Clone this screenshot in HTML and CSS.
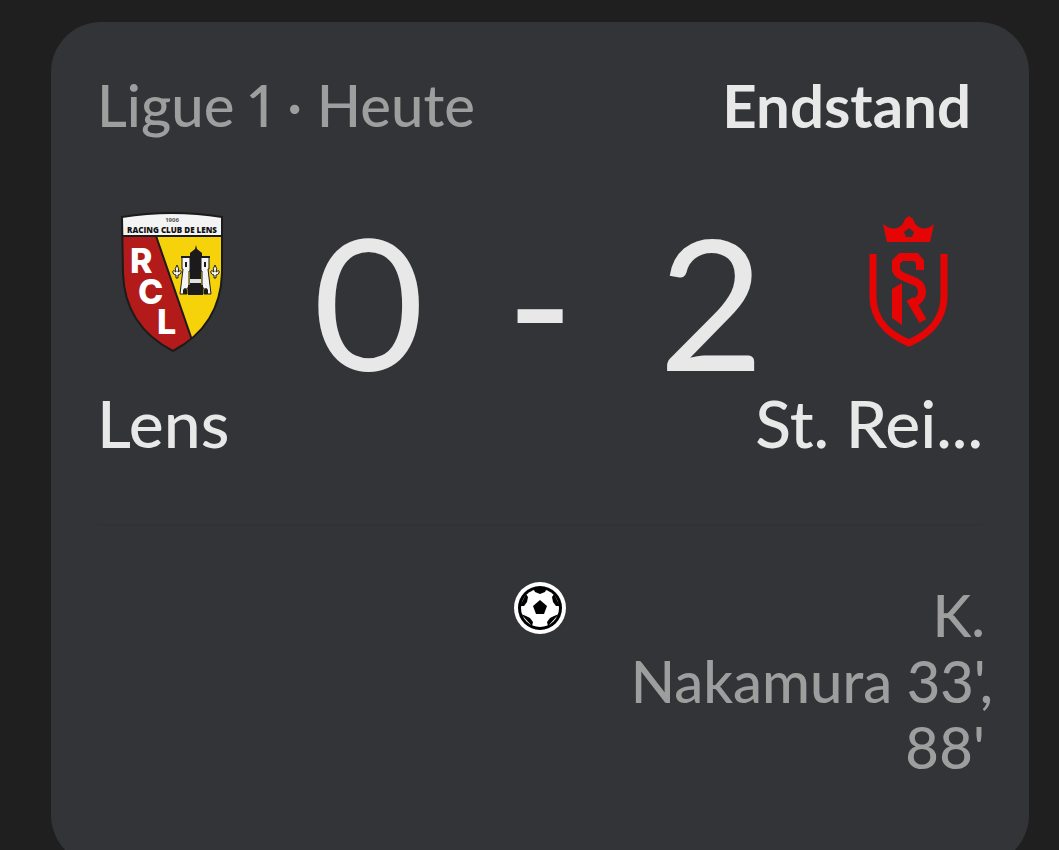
FILE: index.html
```html
<!DOCTYPE html>
<html lang="de">
<head>
  <meta charset="UTF-8">
  <meta name="viewport" content="width=device-width, initial-scale=1.0">
  <title>Lens - St. Reims</title>
  <link rel="stylesheet" href="styles.css">
</head>
<body>
  <main class="card">
    <header class="card-header">
      <span class="league">Ligue 1 · Heute</span>
      <strong class="state">Endstand</strong>
    </header>

    <section class="match">
      <div class="crest">
        <svg width="105" height="141" viewBox="0 0 105 141" role="img" aria-label="RC Lens">
          <defs>
            <clipPath id="lens-shield">
              <path d="M2 5Q52 -3 102 5V61C101 98 83 123 53 139C22 123 4 98 3 61Z"/>
            </clipPath>
          </defs>
          <g clip-path="url(#lens-shield)">
            <rect width="105" height="141" fill="#f5d20a"/>
            <path d="M0 22H36L71 126L53 141H0Z" fill="#b31b1b"/>
            <path d="M36 24L72 128" stroke="#1c1a1a" stroke-width="2"/>
            <rect width="105" height="24" fill="#f4f4f4"/>
            <path d="M0 24H105" stroke="#1c1a1a" stroke-width="2"/>
          </g>
          <path d="M2 5Q52 -3 102 5V61C101 98 83 123 53 139C22 123 4 98 3 61Z" fill="none" stroke="#1c1a1a" stroke-width="2"/>
          <text class="crest-year" x="52" y="10" text-anchor="middle">1906</text>
          <text class="crest-name" x="52" y="21" text-anchor="middle">RACING CLUB DE LENS</text>
          <text class="crest-letters"><tspan x="10" y="61">R</tspan><tspan x="18" y="92">C</tspan><tspan x="37" y="122">L</tspan></text>
          <g fill="#1c1a1a">
            <path d="M70 44V41L75 37L76 33L77 37L82 41V44H81V83H70Z"/>
            <path d="M62 45H70V59H69V76H67V82H60L63 57H62Z" fill="#f4f4f4" stroke="#1c1a1a"/>
            <path d="M81 45H89V57H88L91 82H84V76H82V59H81Z" fill="#f4f4f4" stroke="#1c1a1a"/>
            <path d="M70 67H81V71H70Z" fill="#e0e0e0"/>
            <path d="M65 50H67V55H65ZM84 50H86V55H84ZM63 82V78Q65 74 67 78V82ZM84 82V78Q86 74 88 78V82Z"/>
            <path d="M61 45H70M81 45H90" stroke="#1c1a1a" stroke-width="2"/>
            <path d="M69 73V83M82 73V83" stroke="#1c1a1a" stroke-width="2"/>
          </g>
          <g fill="#f4f4f4" stroke="#1c1a1a">
            <path id="lily" d="M57 53Q60 57 58 60Q62 57 61 61Q60 63 58 63V66H56V63Q54 63 53 61Q52 57 56 60Q54 57 57 53Z"/>
            <use href="#lily" x="38"/>
          </g>
        </svg>
      </div>

      <div class="score">
        <span>0</span>
        <span class="dash">-</span>
        <span>2</span>
      </div>

      <div class="crest">
        <svg width="79" height="133" viewBox="0 0 79 133" role="img" aria-label="Stade de Reims">
          <path fill="#e60505" fill-rule="evenodd" d="M14 8Q22 14 28 12Q34 10 36 3L40 0L44 3Q46 10 52 12Q58 14 65 8L61 26H18ZM40 12L35 16L37 21H43L45 16Z"/>
          <g fill="none" stroke="#e60505" stroke-width="7">
            <path d="M4 38V82C5 105 19 118 40 127C60 118 74 105 75 82V38"/>
            <path d="M51 54V46L47 41H32L27 46V54Q29 59 35 61L47 66Q53 69 53 76Q53 84 43 88" stroke-width="8"/>
            <path d="M41 83L54 105" stroke-width="8"/>
          </g>
          <path d="M23 73L33 67V109L23 102Z" fill="#e60505"/>
        </svg>
      </div>
    </section>

    <div class="teams">
      <span>Lens</span>
      <span>St. Rei...</span>
    </div>

    <section class="events">
      <svg class="ball" width="52" height="52" viewBox="0 0 52 52" role="img" aria-label="Tor">
        <circle cx="26" cy="26" r="26" fill="#fff"/>
        <circle cx="26" cy="26" r="22" fill="#000"/>
        <circle cx="26" cy="26" r="19" fill="#fff"/>
        <path d="M19 6H33L31 10L26 12L21 10ZM40 12L46 24L42 24L39 20L38 15ZM45 32L34 44L33 40L36 36L40 34ZM18 44L7 32L12 34L16 36L19 40ZM6 24L12 12L14 15L13 20L10 24Z" fill="#000"/>
        <path d="M26 18L33 24L30 32H22L19 24Z" fill="#000"/>
      </svg>
      <p class="scorer">
        <span class="line inset">K.</span>
        <span class="line">Nakamura 33',</span>
        <span class="line inset">88'</span>
      </p>
    </section>
  </main>
</body>
</html>
```

FILE: styles.css
```css
body {
  margin: 0;
  height: 100vh;
  overflow: hidden;
  background-color: #1f1f1f;
  color: #e8e8e8;
  font-family: Lato, "Open Sans", sans-serif;
  font-variant-numeric: proportional-nums;
}
.card {
  box-sizing: border-box;
  min-height: 843px;
  margin: 22px 30px 0 51px;
  padding: 48px 46px;
  background-color: #333437;
  border-radius: 50px;
}
.card-header {
  display: flex;
  justify-content: space-between;
  padding-right: 12px;
  font-size: 60px;
  line-height: 70px;
}
.league {
  color: #9e9e9e;
  font-size: 58px;
  font-weight: 500;
}
.state {
  font-weight: 700;
}
.match {
  display: flex;
  align-items: center;
  height: 178px;
  margin-top: 72px;
}
.crest {
  display: flex;
  justify-content: center;
  flex: 0 0 150px;
  margin-bottom: 38px;
}
.score {
  display: grid;
  grid-template-columns: repeat(3, 1fr);
  flex: 1;
  padding: 0 36px;
  font-size: 182px;
  line-height: 184px;
  text-align: center;
}
.teams {
  display: flex;
  justify-content: space-between;
  font-size: 66px;
  font-weight: 500;
  line-height: 66px;
}
.events {
  display: grid;
  grid-template-columns: 1fr 52px 1fr;
  margin-top: 68px;
  padding-top: 56px;
  border-top: 2px solid #313236;
}
.ball {
  grid-column: 2;
}
.scorer {
  margin: 0 -10px 0 0;
  color: #9e9e9e;
  font-size: 58px;
  font-weight: 500;
  line-height: 66px;
  text-align: right;
  white-space: nowrap;
}
.line {
  display: block;
}
.inset {
  padding-right: 8px;
}
.crest-year {
  font: 700 6px "Open Sans", sans-serif;
  fill: #555;
}
.crest-name {
  font: 800 8px "Open Sans", sans-serif;
  fill: #111;
}
.crest-letters {
  font: 800 34px Inter, "Open Sans", sans-serif;
  fill: #fff;
}
```
